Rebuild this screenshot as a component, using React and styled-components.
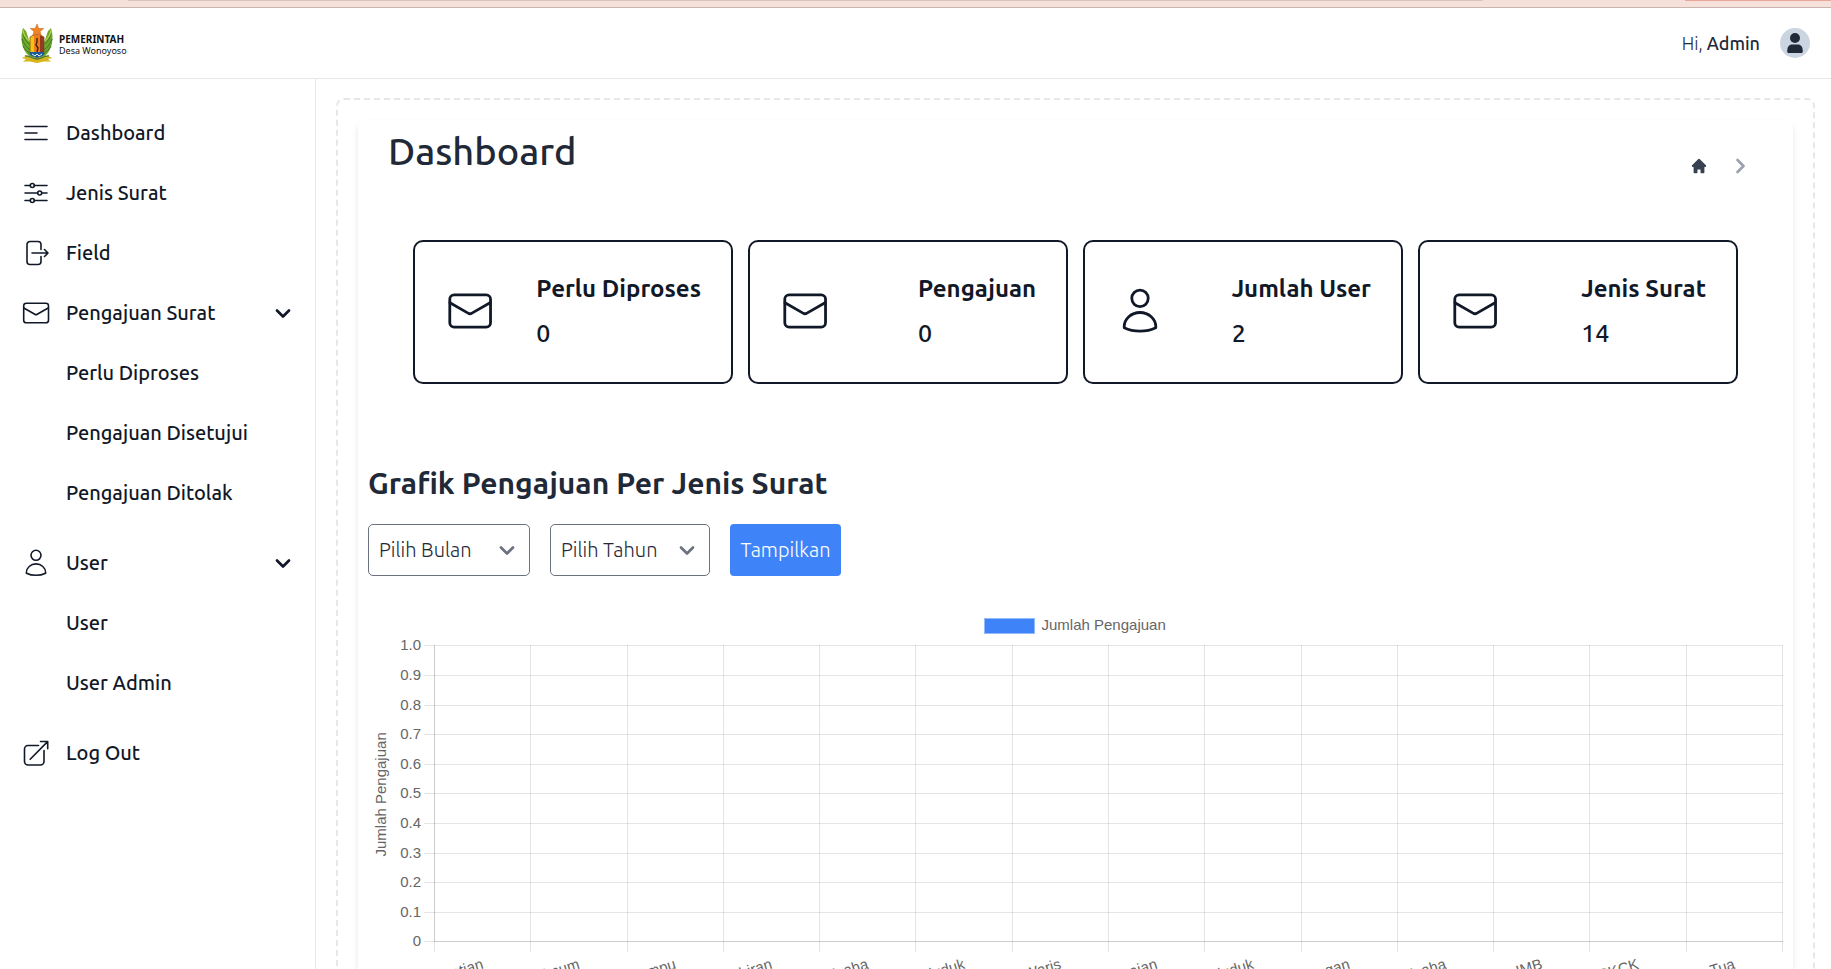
import React, { useEffect, useRef, useState } from "react";
import styled, { createGlobalStyle } from "styled-components";

const GlobalStyle = createGlobalStyle`
  *, *::before, *::after { box-sizing: border-box; }
  body {
    margin: 0;
    background: #fff;
    color: #111827;
    font-family: Ubuntu, "Noto Sans", sans-serif;
  }
  h1, h2, h3, p, ul, ol { margin: 0; padding: 0; }
  ul, ol { list-style: none; }
  a { color: inherit; text-decoration: none; }
`;

const Page = styled.div`
  display: flex;
  flex-direction: column;
  height: 100vh;
  overflow: hidden;
`;

const TopStrip = styled.div`
  display: flex;
  justify-content: space-between;
  flex: none;
  height: 8px;
  background: #f6e0da;
  border-bottom: 1px solid #c9b5b0;
`;

const StripEdge = styled.span`
  width: ${(p) => p.$width};
  height: 1px;
  margin-left: ${(p) => p.$start || "0"};
  background: ${(p) => p.$color};
`;

const Header = styled.header`
  display: flex;
  flex: none;
  align-items: center;
  justify-content: space-between;
  height: 71px;
  padding: 0 21px 0 20px;
  border-bottom: 1px solid #e5e7eb;
`;

const Brand = styled.a`
  display: flex;
  align-items: center;
  gap: 5px;
`;

const BrandText = styled.span`
  display: flex;
  flex-direction: column;
  padding-top: 3px;
  color: #111;
  font-family: "Noto Sans", sans-serif;
  font-size: 9px;
  line-height: 11px;

  strong { font-size: 10px; }
`;

const Account = styled.button`
  display: flex;
  align-items: center;
  gap: 20px;
  padding: 0;
  border: 0;
  background: none;
  color: #1f2937;
  font-family: inherit;
  font-size: 18px;
  font-weight: 300;
  cursor: pointer;

  strong { font-weight: 500; }
`;

const Body = styled.div`
  display: flex;
  flex: 1;
  min-height: 0;
`;

const Sidebar = styled.nav`
  flex: none;
  width: 316px;
  padding-top: 24px;
  border-right: 1px solid #e5e7eb;
`;

const itemStyles = `
  display: flex;
  align-items: center;
  gap: 16px;
  width: 100%;
  height: 60px;
  padding: 0 24px 0 22px;
  border: 0;
  background: none;
  color: #111827;
  font-family: inherit;
  font-size: 20px;
  font-weight: 500;
  line-height: 28px;
  text-align: left;
  cursor: pointer;
  span { flex: 1; }
`;
const NavLink = styled.a`${itemStyles}`;
const NavToggle = styled.button`${itemStyles}`;

const SubList = styled.ul`
  margin-bottom: 10px;
  ${NavLink} { padding-left: 66px; }
`;

const Main = styled.main`
  flex: 1;
  min-width: 0;
  padding: 19px 16px 20px 20px;
`;

const DashedFrame = styled.div`
  padding: 20px;
  border: 2px dashed #e5e7eb;
  border-radius: 8px;
`;

const Panel = styled.section`
  padding: 0 10px 40px;
  border-radius: 8px;
  box-shadow: 0 4px 6px rgba(0, 0, 0, 0.1);
`;

const TitleRow = styled.div`
  display: flex;
  justify-content: space-between;
  padding: 11px 34px 0 20px;
`;

const Title = styled.h1`
  color: #1f2937;
  font-size: 38px;
  font-weight: 500;
  line-height: 40px;
`;

const Breadcrumb = styled.nav`
  display: flex;
  align-items: center;
  gap: 25px;
  height: 24px;
  margin-top: 23px;

  a, svg { display: block; }
`;

const Cards = styled.ul`
  display: grid;
  grid-template-columns: repeat(4, 1fr);
  gap: 15px;
  padding: 62px 45px 0;
`;

const Card = styled.li`
  display: flex;
  align-items: center;
  justify-content: space-between;
  height: 144px;
  padding: 0 30px 2px 32px;
  border: 2px solid #111827;
  border-radius: 10px;
`;

const CardLabel = styled.h3`
  font-size: 24px;
  font-weight: 600;
  line-height: 45px;
`;

const CardValue = styled.p`
  font-size: 25px;
  font-weight: 500;
  line-height: 45px;
`;

const ChartTitle = styled.h2`
  margin-top: 79px;
  color: #1f2937;
  font-size: 30px;
  font-weight: 600;
  line-height: 40px;
`;

const Filters = styled.form`
  display: flex;
  gap: 20px;
  margin-top: 21px;
`;

const SelectBox = styled.div`
  display: grid;
  align-items: center;
  width: ${(p) => p.$width};

  > * { grid-area: 1 / 1; }
  svg {
    justify-self: end;
    margin-right: 15px;
    pointer-events: none;
  }
`;

const Select = styled.select`
  width: 100%;
  height: 52px;
  padding: 0 40px 2px 10px;
  border: 1px solid #6b7280;
  border-radius: 5px;
  appearance: none;
  background: #fff;
  color: #1f2937;
  font-family: inherit;
  font-size: 20px;
  font-weight: 300;
`;

const Submit = styled.button`
  width: 111px;
  height: 52px;
  padding: 0 0 2px;
  border: 0;
  border-radius: 4px;
  background: #3f83f8;
  color: #fff;
  font-family: inherit;
  font-size: 20px;
  font-weight: 300;
  cursor: pointer;
`;

const ChartArea = styled.div`
  margin-top: 32px;
  height: 480px;

  svg {
    display: block;
    width: 100%;
    height: 480px;
    font-family: "Liberation Sans", Arial, sans-serif;
    font-size: 15px;
    fill: #666;
  }
`;

const iconPaths = {
  menu: <path d="M3 7.5h22M3 14h12M3 20.5h22" />,
  sliders: (
    <>
      <path d="M3 6.5h5.3M12.3 6.5H25M3 14h12.7M19.7 14H25M3 21.5h5.3M12.3 21.5H25" />
      <circle cx="10.3" cy="6.5" r="2" />
      <circle cx="17.7" cy="14" r="2" />
      <circle cx="10.3" cy="21.5" r="2" />
    </>
  ),
  exit: (
    <path d="M19 10.5V5.5a3 3 0 0 0-3-3H8a3 3 0 0 0-3 3v17a3 3 0 0 0 3 3h8a3 3 0 0 0 3-3v-5M10 14h16M22.5 10.5 26 14l-3.5 3.5" />
  ),
  mail: (
    <>
      <rect x="1.7" y="4.2" width="24.8" height="19.6" rx="2.6" />
      <path d="m1.8 9 11 6.3c.8.5 1.6.5 2.4 0l11-6.3" />
    </>
  ),
  user: (
    <>
      <circle cx="14" cy="6.3" r="5" />
      <path d="M14 14.9c-5.4 0-9.6 4-9.6 8.6v.7c5.6 2.8 13.6 2.8 19.2 0v-.7c0-4.6-4.2-8.6-9.6-8.6z" />
    </>
  ),
  external: (
    <path d="M16.5 6.5H6A3.5 3.5 0 0 0 2.5 10v12.5A3.5 3.5 0 0 0 6 26h12.5a3.5 3.5 0 0 0 3.5-3.5v-11M8.2 20.2 25.6 2.6M18.5 2.5h7.2v7.2" />
  ),
};

const Icon = ({ name, size = 28, stroke = 1.6 }) => (
  <svg
    width={size}
    height={size}
    viewBox="0 0 28 28"
    fill="none"
    stroke="#111827"
    strokeWidth={stroke}
    strokeLinecap="round"
    strokeLinejoin="round"
    aria-hidden="true"
  >
    {iconPaths[name]}
  </svg>
);

const Chevron = ({ color = "#111827" }) => (
  <svg width="16" height="16" viewBox="0 0 16 16" fill="none" stroke={color} strokeWidth="2.7" strokeLinecap="round" strokeLinejoin="round" aria-hidden="true">
    <path d="m2 5.5 6 6 6-6" />
  </svg>
);

const Emblem = () => (
  <svg width="34" height="40" viewBox="0 0 34 40" aria-hidden="true">
    <path d="M3 5C0 14 1 26 9 33l5 2V24C9 20 8 13 6 8L3 5z" fill="#6fa82e" />
    <path d="M31 5c3 9 2 21-6 28l-5 2V24c5-4 6-11 8-16l3-3z" fill="#6fa82e" />
    <path d="M3 10c1 5 3 8 6 11M2 16c2 5 4 8 8 11M3 23c2 4 5 6 8 8M31 10c-1 5-3 8-6 11M32 16c-2 5-4 8-8 11M31 23c-2 4-5 6-8 8" fill="none" stroke="#3c751e" strokeWidth="1" />
    <path d="M3 7c0 5 3 8 6 11M31 7c0 5-3 8-6 11" fill="none" stroke="#b4cf43" strokeWidth="1.4" />
    <path d="M10 14q7-5 14 0v17l-7 5-7-5z" fill="#f3c313" stroke="#745a20" strokeWidth=".8" />
    <path d="M14 12h6v18h-6z" fill="#ee7c19" />
    <path d="M20 12l4 2v16h-4z" fill="#943a23" />
    <path d="M17 15v4l-1 3 2 3-1 4" fill="none" stroke="#442316" strokeWidth="1.4" />
    <path d="M10 29h14v3l-7 3-7-3z" fill="#185d9e" />
    <path d="m12 31 3 2 2-2 2 2 3-2" fill="none" stroke="#e7f0ef" strokeWidth="1" />
    <path d="m17 1 1.7 4.5h5L20 8.5l1.5 4.5-4.5-2.5-4.5 2.5L14 8.5l-3.7-3h5z" fill="#f1841c" stroke="#c5561c" strokeWidth=".5" />
    <path d="M2 35c6-4 9 1 15 1s9-5 15-1l-4 1 3 3c-6-1-9 0-14 1-5-1-8-2-14-1l3-3z" fill="#d7b51b" />
    <path d="M5 33c5-1 7 3 12 3s7-4 12-3" fill="none" stroke="#527b27" strokeWidth="1.5" />
  </svg>
);

const Avatar = () => (
  <svg width="30" height="30" viewBox="0 0 30 30" aria-hidden="true">
    <circle cx="15" cy="15" r="15" fill="#cbd5e1" />
    <circle cx="15" cy="10" r="5" fill="#1f2937" />
    <path d="M7.2 23.5c0-4.5 1.8-7 5-7h5.6c3.2 0 5 2.5 5 7 0 .9-.6 1.5-1.5 1.5H8.7c-.9 0-1.5-.6-1.5-1.5z" fill="#1f2937" />
  </svg>
);

const navigation = [
  { label: "Dashboard", icon: "menu" },
  { label: "Jenis Surat", icon: "sliders" },
  { label: "Field", icon: "exit" },
  { label: "Pengajuan Surat", icon: "mail", children: ["Perlu Diproses", "Pengajuan Disetujui", "Pengajuan Ditolak"] },
  { label: "User", icon: "user", children: ["User", "User Admin"] },
  { label: "Log Out", icon: "external" },
];

const stats = [
  { label: "Perlu Diproses", value: 0, icon: "mail" },
  { label: "Pengajuan", value: 0, icon: "mail" },
  { label: "Jumlah User", value: 2, icon: "user" },
  { label: "Jenis Surat", value: 14, icon: "mail" },
];

const letterTypes = [
  "Kematian", "Umum", "Tidak Mampu", "Kelahiran", "Usaha", "Penduduk", "Ahli Waris",
  "Keramaian", "Penduduk", "Keterangan", "Usaha", "IMB", "SKCK", "Orang Tua",
];

function BarChart() {
  const ref = useRef(null);
  const [width, setWidth] = useState(1415);

  useEffect(() => {
    const observer = new ResizeObserver(([entry]) => setWidth(entry.contentRect.width));
    observer.observe(ref.current);
    return () => observer.disconnect();
  }, []);

  const left = 66;
  const top = 37.4;
  const plotHeight = 296;
  const bottom = top + plotHeight;
  const column = (width - 1 - left) / letterTypes.length;
  const crisp = (n) => Math.round(n) + 0.5;
  const legendX = crisp((width + left) / 2 - 125);

  return (
    <ChartArea ref={ref}>
      <svg role="img" aria-label="Jumlah Pengajuan">
        <rect x={legendX} y="10.5" width="50" height="15" fill="#3f83f8" stroke="#93bbfb" />
        <text x={legendX + 57} y="22">Jumlah Pengajuan</text>
        <g stroke="#000" strokeOpacity="0.1">
          {Array.from({ length: 11 }, (_, i) => {
            const y = crisp(top + (i * plotHeight) / 10);
            return <line key={i} x1={left - 10} x2={width} y1={y} y2={y} />;
          })}
          {Array.from({ length: letterTypes.length + 1 }, (_, i) => {
            const x = crisp(left + i * column);
            return <line key={i} x1={x} x2={x} y1={Math.round(top)} y2={Math.round(bottom) + 11} />;
          })}
          <line x1={crisp(left)} x2={crisp(left)} y1={Math.round(top)} y2={Math.round(bottom)} />
          <line x1={left} x2={width} y1={crisp(bottom)} y2={crisp(bottom)} />
        </g>
        {Array.from({ length: 11 }, (_, i) => (
          <text key={i} x={left - 13} y={Math.round(top + (i * plotHeight) / 10) + 5} textAnchor="end">
            {i === 10 ? "0" : ((10 - i) / 10).toFixed(1)}
          </text>
        ))}
        <text transform={`translate(18 ${top + plotHeight / 2 + 1}) rotate(-90)`} textAnchor="middle">
          Jumlah Pengajuan
        </text>
        {letterTypes.map((label, i) => (
          <text
            key={i}
            transform={`translate(${left + (i + 0.5) * column + 2} ${bottom + 27}) rotate(-17)`}
            textAnchor="end"
          >
            {label}
          </text>
        ))}
      </svg>
    </ChartArea>
  );
}

export default function App() {
  const [closed, setClosed] = useState({});
  const toggle = (label) => setClosed((c) => ({ ...c, [label]: !c[label] }));

  return (
    <Page>
      <GlobalStyle />
      <TopStrip>
        <StripEdge $start="7%" $width="74%" $color="#d6c5c0" />
        <StripEdge $width="8%" $color="#e8a598" />
      </TopStrip>
      <Header>
        <Brand href="#">
          <Emblem />
          <BrandText>
            <strong>PEMERINTAH</strong>
            <span>Desa Wonoyoso</span>
          </BrandText>
        </Brand>
        <Account type="button">
          <span>Hi, <strong>Admin</strong></span>
          <Avatar />
        </Account>
      </Header>
      <Body>
        <Sidebar aria-label="Menu">
          <ul>
            {navigation.map(({ label, icon, children }) => (
              <li key={label}>
                {children ? (
                  <>
                    <NavToggle type="button" aria-expanded={!closed[label]} onClick={() => toggle(label)}>
                      <Icon name={icon} />
                      <span>{label}</span>
                      <Chevron />
                    </NavToggle>
                    {!closed[label] && (
                      <SubList>
                        {children.map((child) => (
                          <li key={child}><NavLink href="#">{child}</NavLink></li>
                        ))}
                      </SubList>
                    )}
                  </>
                ) : (
                  <NavLink href="#">
                    <Icon name={icon} />
                    <span>{label}</span>
                  </NavLink>
                )}
              </li>
            ))}
          </ul>
        </Sidebar>
        <Main>
          <DashedFrame>
            <Panel>
              <TitleRow>
                <Title>Dashboard</Title>
                <Breadcrumb aria-label="Breadcrumb">
                  <a href="#" aria-label="Home">
                    <svg width="18" height="18" viewBox="0 0 20 20" fill="#374151" aria-hidden="true">
                      <path d="m17.7 9.3-7-7a1 1 0 0 0-1.4 0l-7 7a1 1 0 0 0 .7 1.7H4v6a1 1 0 0 0 1 1h2.5a.8.8 0 0 0 .8-.8V14h3.4v3.2a.8.8 0 0 0 .8.8H15a1 1 0 0 0 1-1v-6h1a1 1 0 0 0 .7-1.7z" />
                    </svg>
                  </a>
                  <svg width="16" height="20" viewBox="0 0 16 20" fill="none" stroke="#9ca3af" strokeWidth="2.7" strokeLinecap="round" strokeLinejoin="round" aria-hidden="true">
                    <path d="m4.5 4 6 6-6 6" />
                  </svg>
                </Breadcrumb>
              </TitleRow>
              <Cards>
                {stats.map(({ label, value, icon }) => (
                  <Card key={label}>
                    <Icon name={icon} size={46} stroke={1.7} />
                    <div>
                      <CardLabel>{label}</CardLabel>
                      <CardValue>{value}</CardValue>
                    </div>
                  </Card>
                ))}
              </Cards>
              <ChartTitle>Grafik Pengajuan Per Jenis Surat</ChartTitle>
              <Filters onSubmit={(e) => e.preventDefault()}>
                <SelectBox $width="162px">
                  <Select aria-label="Pilih Bulan"><option>Pilih Bulan</option></Select>
                  <Chevron color="#6b7280" />
                </SelectBox>
                <SelectBox $width="160px">
                  <Select aria-label="Pilih Tahun"><option>Pilih Tahun</option></Select>
                  <Chevron color="#6b7280" />
                </SelectBox>
                <Submit type="submit">Tampilkan</Submit>
              </Filters>
              <BarChart />
            </Panel>
          </DashedFrame>
        </Main>
      </Body>
    </Page>
  );
}
